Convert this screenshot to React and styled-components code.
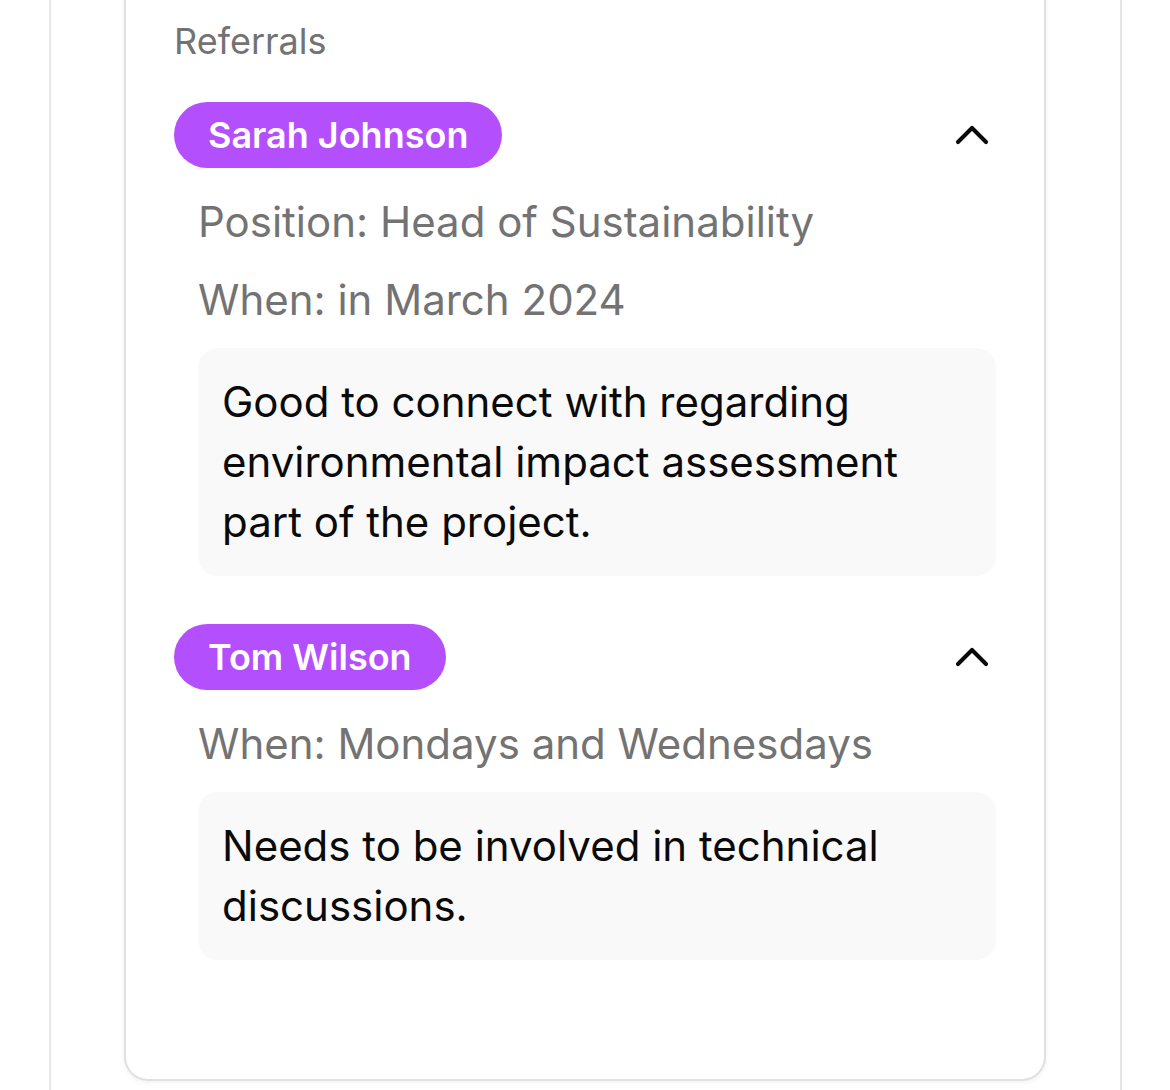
import React from "react";
import styled, { createGlobalStyle } from "styled-components";
import { ChevronUp } from "lucide-react";

const referrals = [
  {
    name: "Sarah Johnson",
    details: ["Position: Head of Sustainability", "When: in March 2024"],
    note: "Good to connect with regarding environmental impact assessment part of the project.",
  },
  {
    name: "Tom Wilson",
    details: ["When: Mondays and Wednesdays"],
    note: "Needs to be involved in technical discussions.",
  },
];

export default function App() {
  return (
    <>
      <GlobalStyle />
      <Frame>
        <Card>
          <Heading>Referrals</Heading>
          <List>
            {referrals.map((r) => (
              <Item key={r.name}>
                <ItemHeader>
                  <NamePill>{r.name}</NamePill>
                  <Toggle aria-label="Collapse">
                    <ChevronUp size={56} strokeWidth={1.75} />
                  </Toggle>
                </ItemHeader>
                <Details>
                  {r.details.map((d) => (
                    <DetailLine key={d}>{d}</DetailLine>
                  ))}
                  <Note>{r.note}</Note>
                </Details>
              </Item>
            ))}
          </List>
        </Card>
      </Frame>
    </>
  );
}

const GlobalStyle = createGlobalStyle`
  body {
    margin: 0;
    background: #fff;
    font-family: Inter, "Noto Sans", sans-serif;
    overflow: hidden;
  }
`;

const Frame = styled.div`
  box-sizing: border-box;
  margin-left: 49px;
  width: 1073px;
  height: 1090px;
  padding-left: 73px;
  border-left: 2px solid #e6e6e6;
  border-right: 2px solid #e6e6e6;
  overflow: hidden;
`;

const Card = styled.div`
  box-sizing: border-box;
  width: 922px;
  margin-top: -31px;
  padding: 48px 48px 119px;
  background: #fff;
  border: 2px solid #e0e0e0;
  border-radius: 24px;
  box-shadow: 0 2px 5px rgba(0, 0, 0, 0.05);
`;

const Heading = styled.div`
  font-size: 36px;
  color: #737373;
  margin-bottom: 39px;
`;

const List = styled.div`
  display: flex;
  flex-direction: column;
  gap: 48px;
`;

const Item = styled.div`
  display: flex;
  flex-direction: column;
  gap: 24px;
`;

const ItemHeader = styled.div`
  display: flex;
  align-items: center;
  justify-content: space-between;
`;

const NamePill = styled.span`
  display: inline-block;
  padding: 11px 34px;
  border-radius: 33px;
  background: #b44ffd;
  color: #fff;
  font-size: 36px;
  font-weight: 600;
  line-height: 44px;
`;

const Toggle = styled.button`
  display: flex;
  padding: 0;
  margin-right: -4px;
  border: none;
  background: none;
  color: #0a0a0a;
`;

const Details = styled.div`
  display: flex;
  flex-direction: column;
  gap: 18px;
  padding-left: 24px;
`;

const DetailLine = styled.div`
  font-size: 42px;
  line-height: 60px;
  color: #737373;
`;

const Note = styled.div`
  padding: 24px;
  border-radius: 20px;
  background: #f9f9f9;
  color: #0a0a0a;
  font-size: 42px;
  line-height: 60px;
`;
